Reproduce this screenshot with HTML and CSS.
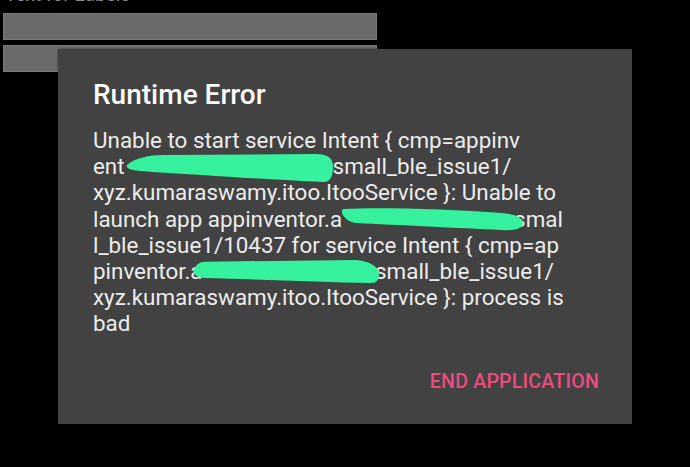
FILE: index.html
```html
<!DOCTYPE html>
<html>
<head>
<meta charset="utf-8">
<link rel="stylesheet" href="styles.css">
</head>
<body>
<div class="screen">
  <div class="label">Text for Labels</div>
  <div class="field"></div>
  <div class="field"></div>
</div>
<div class="dialog">
  <h1 class="title">Runtime Error</h1>
  <div class="message">
    <div class="line">Unable to start service Intent { cmp=appinv</div>
    <div class="line">ent<span class="redact r1"><svg viewBox="0 0 214 36" width="214" height="36"><path d="M4 15 C12 8 26 5 41 5 L193 4 C204 4 210 8 210 16 C210 26 208 32 200 32 C150 30 80 25 30 22 C14 21 2 20 4 15 Z" fill="#36f29e"/></svg></span>small_ble_issue1/</div>
    <div class="line">xyz.kumaraswamy.itoo.ItooService }: Unable to</div>
    <div class="line">launch app appinventor.a<span class="redact r2"><svg viewBox="0 0 190 30" width="190" height="30"><path d="M5 5 C40 3 110 5 164 9 C178 10 185 14 185 19 C185 24 178 27 164 26 C120 24 60 21 18 19 C8 18 1 8 5 5 Z" fill="#36f29e"/></svg></span>smal</div>
    <div class="line">l_ble_issue1/10437 for service Intent { cmp=ap</div>
    <div class="line">pinventor.a<span class="redact r3"><svg viewBox="0 0 192 32" width="192" height="32"><path d="M3 14 C5 8 9 6 14 5.7 L162 4 C176 4 188 10 188 18 C188 24 186 27 180 27 C130 26 60 23 14 22 C6 21 1 18 3 14 Z" fill="#36f29e"/></svg></span>small_ble_issue1/</div>
    <div class="line">xyz.kumaraswamy.itoo.ItooService }: process is</div>
    <div class="line">bad</div>
  </div>
  <div class="actions"><button class="btn">END APPLICATION</button></div>
</div>
</body>
</html>
```
FILE: styles.css
```css
html, body {
  margin: 0;
  padding: 0;
  background: #000;
  width: 690px;
  height: 467px;
  overflow: hidden;
  font-family: Roboto, "Noto Sans", sans-serif;
}
.screen {
  padding: 0 0 0 3px;
  display: flex;
  flex-direction: column;
  gap: 5px;
  width: 374px;
  margin-top: -17px;
}
.label {
  color: #8a8a8a;
  font-size: 19px;
  line-height: 24px;
  padding-left: 2px;
  margin-bottom: 1px;
}
.field {
  height: 25px;
  background: #6b6b6b;
  border: 1px solid #7a7a7a;
}
.dialog {
  position: absolute;
  left: 58px;
  top: 49px;
  width: 574px;
  height: 375px;
  background: #424242;
  box-sizing: border-box;
  padding: 29px 35px 0 35px;
  box-shadow: 0 0 2px rgba(0,0,0,0.5);
}
.title {
  margin: 0;
  color: #fafafa;
  font-size: 28px;
  font-weight: 500;
  line-height: 33px;
}
.message {
  margin-top: 16px;
  color: #ececec;
  font-size: 22.4px;
  line-height: 26.2px;
}
.line { white-space: nowrap; }
.redact {
  display: inline-block;
  position: relative;
  height: 1px;
  vertical-align: baseline;
}
.redact svg {
  position: absolute;
}
.r1 { width: 208px; }
.r1 svg { left: -2px; bottom: -12px; }
.r2 { width: 172px; }
.r2 svg { left: -4px; bottom: -7px; }
.r3 { width: 172.5px; }
.r3 svg { left: -12px; bottom: -9px; }
.actions {
  display: flex;
  justify-content: flex-end;
  margin-top: 33px;
}
.btn {
  background: none;
  border: none;
  padding: 0;
  margin-right: -2px;
  color: #ef4a7e;
  font-family: Roboto, sans-serif;
  font-weight: 500;
  font-size: 19.6px;
  line-height: 23px;
  letter-spacing: 0.2px;
}
```
